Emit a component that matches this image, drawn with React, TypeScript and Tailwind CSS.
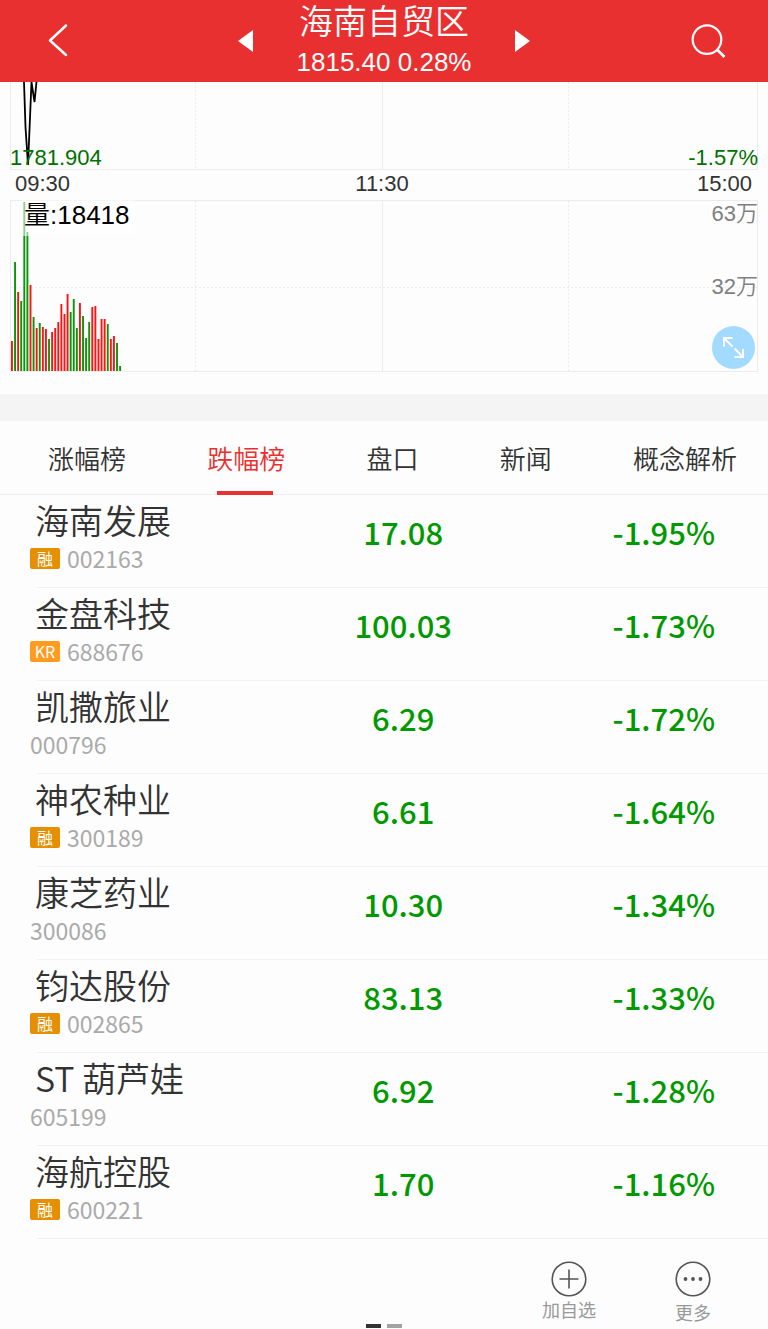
import React from 'react';

type Stock = {
  name: string;
  code: string;
  tag?: '融' | 'KR';
  price: string;
  change: string;
};

const stocks: Stock[] = [
  { name: '海南发展', code: '002163', tag: '融', price: '17.08', change: '-1.95%' },
  { name: '金盘科技', code: '688676', tag: 'KR', price: '100.03', change: '-1.73%' },
  { name: '凯撒旅业', code: '000796', price: '6.29', change: '-1.72%' },
  { name: '神农种业', code: '300189', tag: '融', price: '6.61', change: '-1.64%' },
  { name: '康芝药业', code: '300086', price: '10.30', change: '-1.34%' },
  { name: '钧达股份', code: '002865', tag: '融', price: '83.13', change: '-1.33%' },
  { name: 'ST 葫芦娃', code: '605199', price: '6.92', change: '-1.28%' },
  { name: '海航控股', code: '600221', tag: '融', price: '1.70', change: '-1.16%' },
];

const tabs = ['涨幅榜', '跌幅榜', '盘口', '新闻', '概念解析'];

// [height, went up]
const volumes: [number, boolean][] = [
  [30, true], [109, false], [79, true], [70, false], [169, false], [139, false],
  [86, true], [54, false], [43, true], [48, false], [44, true], [42, true],
  [32, false], [39, true], [43, true], [49, true], [67, true], [57, true],
  [77, true], [59, false], [72, false], [43, false], [68, true], [55, false],
  [33, false], [49, false], [64, true], [65, true], [32, true], [52, true],
  [52, true], [47, false], [32, true], [35, true], [28, false], [5, false],
];

const Header: React.FC = () => (
  <header className="grid grid-cols-[1fr_auto_1fr] items-center h-[82px] bg-[#e93030] text-white">
    <button aria-label="返回" className="justify-self-start pl-12">
      <svg width="20" height="34" viewBox="0 0 20 34" fill="none" stroke="currentColor" strokeWidth="2.4">
        <path d="M18 1.500 2 16.500 18 31" strokeLinecap="round" strokeLinejoin="round" />
      </svg>
    </button>
    <div className="flex items-center gap-11">
      <button aria-label="上一个">
        <svg width="15" height="22" viewBox="0 0 15 22" fill="currentColor">
          <path d="M15 0v22L0 11z" />
        </svg>
      </button>
      <div className="text-center">
        <h1 className="text-[34px] leading-[42px] font-[350]">海南自贸区</h1>
        <p className="text-[26px] leading-[38px]">1815.40 0.28%</p>
      </div>
      <button aria-label="下一个">
        <svg width="15" height="22" viewBox="0 0 15 22" fill="currentColor">
          <path d="M0 0v22l15-11z" />
        </svg>
      </button>
    </div>
    <button aria-label="搜索" className="justify-self-end pr-[42px]">
      <svg width="35" height="35" viewBox="0 0 35 35" fill="none" stroke="currentColor" strokeWidth="2.2">
        <circle cx="16" cy="15.6" r="14.3" />
        <path d="m26.500 26 7 7" strokeWidth="2.6" />
      </svg>
    </button>
  </header>
);

const Chart: React.FC = () => (
  <section className="relative">
    <svg viewBox="0 0 768 312" className="block w-full font-['Liberation_Sans','Noto_Sans_CJK_SC',sans-serif]">
      <g stroke="#ececec" fill="none">
        <path d="M10.500 0V87.500H757.500V0M382.500 0V87.500" />
        <path d="M10.500 118.500H757.500V289.500H10.500zM382.500 118.500V289.500" />
        <path strokeDasharray="2 2" d="M195.500 0V87M568.500 0V87M195.500 119V289M568.500 119V289M11 205.500H757" />
      </g>
      <path d="M24 0 25.500 45 28 83 31.500 0 34.500 20 36.500 0" fill="none" stroke="#000" strokeWidth="1.8" />
      {volumes.map(([height, up], i) => (
        <rect
          key={i}
          x={11 + i * 3.09}
          y={289 - height}
          width="1.9"
          height={height}
          fill={up ? '#fa1414' : '#0a960a'}
        />
      ))}
      <rect x="22" y="118" width="112" height="36" fill="#fff" fillOpacity="0.55" />
      <g fontSize="22">
        <text x="10" y="83" fill="#007000">1781.904</text>
        <text x="758" y="83" fill="#007000" textAnchor="end">-1.57%</text>
        <g fill="#333">
          <text x="15" y="109">09:30</text>
          <text x="382" y="109" textAnchor="middle">11:30</text>
          <text x="752" y="109" textAnchor="end">15:00</text>
        </g>
        <g fill="#808080" textAnchor="end" className="font-[350]">
          <text x="758" y="139">63万</text>
          <text x="758" y="212">32万</text>
        </g>
      </g>
      <text x="24" y="142" fontSize="26" className="font-[350]">量:18418</text>
    </svg>
    <button aria-label="全屏" className="absolute right-[13px] bottom-[25px] rounded-full bg-[#a3daff] text-white">
      <svg width="43" height="43" viewBox="0 0 43 43" fill="none" stroke="currentColor" strokeWidth="2">
        <path d="M12 20.500V12h8.500M12.500 12.500l8 8M31 23v8h-8.500M30.500 30.500l-8-8" />
      </svg>
    </button>
  </section>
);

const StockRow: React.FC<{ stock: Stock }> = ({ stock }) => (
  <tr className="h-[93px] align-top">
    <td className="relative w-[36%] pl-[30px] after:absolute after:left-[37px] after:right-0 after:bottom-0 after:h-px after:bg-[#f1f1f1]">
      <p className="mt-0.5 pl-[5px] text-[34px] leading-[46px] text-[#333] font-[350]">{stock.name}</p>
      <div className="flex items-center gap-[7px] h-[30px]">
        {stock.tag === '融' && (
          <span className="w-[30px] h-[21px] rounded-xs bg-[#e68f00] text-white text-base leading-5 text-center">融</span>
        )}
        {stock.tag === 'KR' && (
          <span className="w-[30px] h-[21px] rounded-xs bg-[#ff9c20] text-white text-base leading-5 text-center">KR</span>
        )}
        <span className="text-[23px] leading-[28px] text-[#aaa]">{stock.code}</span>
      </div>
    </td>
    <td className="relative w-[33%] pt-[15px] text-center text-[31px] leading-[44px] font-medium text-[#090] after:absolute after:inset-x-0 after:bottom-0 after:h-px after:bg-[#f1f1f1]">
      {stock.price}
    </td>
    <td className="relative pt-[15px] pr-[53px] text-right text-[31px] leading-[44px] font-medium text-[#090] after:absolute after:inset-x-0 after:bottom-0 after:h-px after:bg-[#f1f1f1]">
      {stock.change}
    </td>
  </tr>
);

const App: React.FC = () => {
  return (
    <div className="min-h-screen bg-[#fdfdfd] font-['Liberation_Sans','Noto_Sans_CJK_SC',sans-serif]">
      <Header />
      <Chart />
      <div className="h-[27px] bg-[#f4f4f4]"></div>

      <main className="font-['Noto_Sans_CJK_SC',sans-serif]">
        <nav className="flex justify-between pl-12 pr-[31px] border-b border-[#eee] font-[350]">
          {tabs.map((tab) => (
            <button
              key={tab}
              className={
                tab === '跌幅榜'
                  ? 'relative h-[73px] text-[26px] text-[#e93030] after:absolute after:bottom-[-1px] after:left-[10px] after:h-1 after:w-14 after:bg-[#e93030]'
                  : 'h-[73px] text-[26px] text-[#333]'
              }
            >
              {tab}
            </button>
          ))}
        </nav>
        <table className="w-full table-fixed border-collapse">
          <tbody>
            {stocks.map((stock) => (
              <StockRow key={stock.code} stock={stock} />
            ))}
          </tbody>
        </table>
      </main>

      <footer className="font-['Noto_Sans_CJK_SC',sans-serif]">
        <div className="flex justify-end pt-[22px] pr-[13px] text-lg leading-6 text-[#999]">
          <button className="flex flex-col items-center w-[124px]">
            <svg width="36" height="36" viewBox="0 0 36 36" fill="none" stroke="#555" strokeWidth="1.6">
              <circle cx="18" cy="18" r="16.8" />
              <path d="M8.500 18h19M18 8.500v19" />
            </svg>
            加自选
          </button>
          <button className="flex flex-col items-center gap-[3px] w-[124px]">
            <svg width="36" height="36" viewBox="0 0 36 36" fill="none" stroke="#555" strokeWidth="1.6">
              <circle cx="18" cy="18" r="16.8" />
              <g fill="#555" stroke="none">
                <circle cx="10.500" cy="18" r="1.9" />
                <circle cx="18" cy="18" r="1.9" />
                <circle cx="25.500" cy="18" r="1.9" />
              </g>
            </svg>
            更多
          </button>
        </div>
        <div className="flex justify-center gap-1.5">
          <span className="w-[15px] h-1 bg-[#333]"></span>
          <span className="w-[15px] h-1 bg-[#a3a3a3]"></span>
        </div>
      </footer>
    </div>
  );
};

export default App;
